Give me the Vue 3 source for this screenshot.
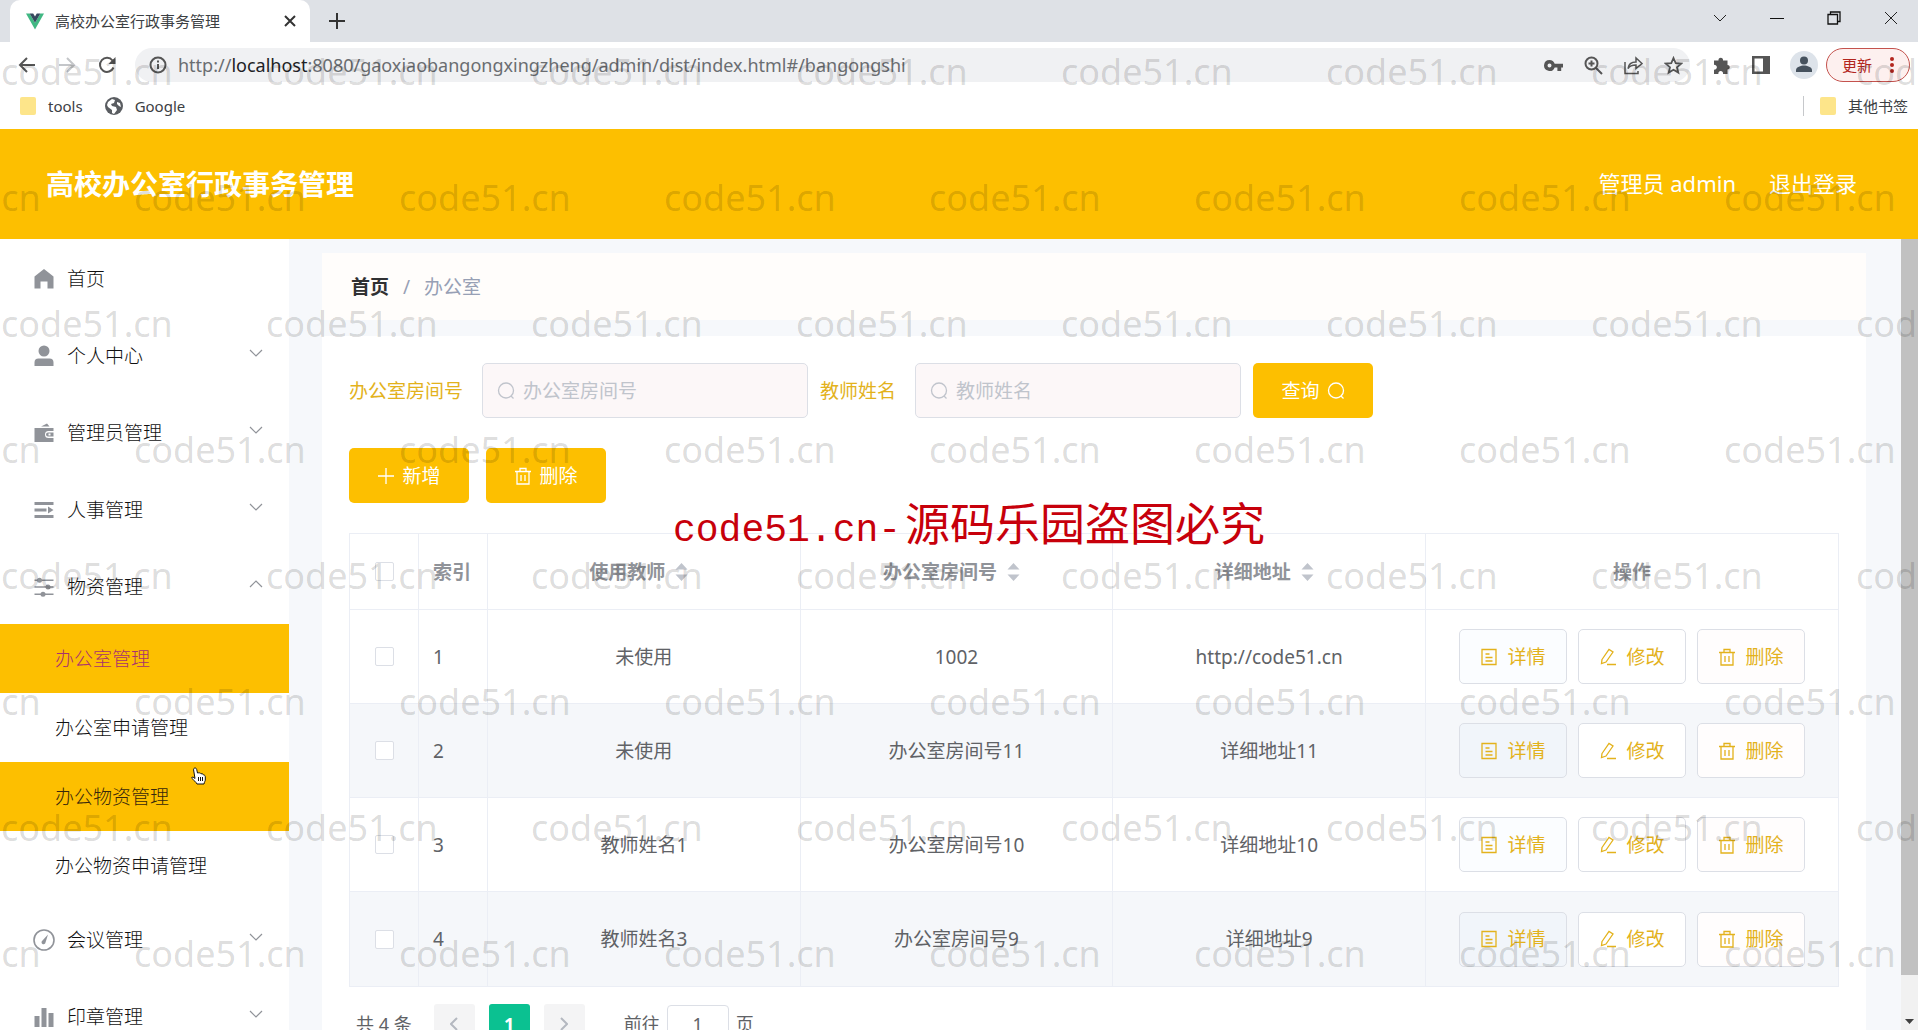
<script setup>
import { ref } from 'vue'

const menu = [
  { label: '首页', icon: 'home' },
  { label: '个人中心', icon: 'user', arrow: 'down' },
  { label: '管理员管理', icon: 'wallet', arrow: 'down' },
  { label: '人事管理', icon: 'list', arrow: 'down' },
  {
    label: '物资管理',
    icon: 'sliders',
    arrow: 'up',
    children: [
      { label: '办公室管理', state: 'active' },
      { label: '办公室申请管理' },
      { label: '办公物资管理', state: 'hover' },
      { label: '办公物资申请管理' }
    ]
  },
  { label: '会议管理', icon: 'gauge', arrow: 'down' },
  { label: '印章管理', icon: 'bars', arrow: 'down' }
]

const columns = ['使用教师', '办公室房间号', '详细地址']

const rows = [
  { id: 1, teacher: '未使用', room: '1002', address: 'http://code51.cn' },
  { id: 2, teacher: '未使用', room: '办公室房间号11', address: '详细地址11' },
  { id: 3, teacher: '教师姓名1', room: '办公室房间号10', address: '详细地址10' },
  { id: 4, teacher: '教师姓名3', room: '办公室房间号9', address: '详细地址9' }
]

const room = ref('')
const teacher = ref('')
const page = ref('1')
</script>

<template>
  <div class="window">
    <div class="tabs">
      <div class="tab">
        <svg class="vue-logo" viewBox="0 0 20 18"><path fill="#41b883" d="M0 0h4l6 10.500L16 0h4L10 18z" /><path fill="#35495e" d="M4 0h4l2 3.500L12 0h4l-6 10.500z" /></svg>
        <span class="tab-title">高校办公室行政事务管理</span>
        <button class="plain" aria-label="关闭标签页">
          <svg width="12" height="12" viewBox="0 0 12 12" fill="none" stroke="#333" stroke-width="2"><path d="M1 1l10 10M11 1L1 11" /></svg>
        </button>
      </div>
      <button class="plain new-tab" aria-label="新标签页">
        <svg width="16" height="16" viewBox="0 0 16 16" fill="none" stroke="#333" stroke-width="2"><path d="M8 0v16M0 8h16" /></svg>
      </button>
      <div class="win-buttons">
        <button class="plain" aria-label="搜索标签页"><svg width="14" height="14" viewBox="0 0 14 14" fill="none" stroke="#222"><path d="M1 4l6 6 6-6" /></svg></button>
        <button class="plain" aria-label="最小化"><svg width="14" height="14" viewBox="0 0 14 14" fill="none" stroke="#111"><path d="M0 7.500h14" /></svg></button>
        <button class="plain" aria-label="还原"><svg width="14" height="14" viewBox="0 0 14 14" fill="none" stroke="#111" stroke-width="1.300"><path d="M1 3.500h9.500V13H1zM3.500 3.500V1H13v9.500h-2.500" /></svg></button>
        <button class="plain" aria-label="关闭"><svg width="14" height="14" viewBox="0 0 14 14" fill="none" stroke="#222"><path d="M1 1l12 12M13 1L1 13" /></svg></button>
      </div>
    </div>

    <div class="toolbar">
      <div class="nav-buttons">
        <button class="plain" aria-label="后退"><svg width="18" height="18" viewBox="0 0 18 18" fill="none" stroke="#555" stroke-width="2"><path d="M17 9H2M9 2L2 9l7 7" /></svg></button>
        <button class="plain" aria-label="前进"><svg width="18" height="18" viewBox="0 0 18 18" fill="none" stroke="#c4c6c9" stroke-width="2"><path d="M1 9h15M9 2l7 7-7 7" /></svg></button>
        <button class="plain" aria-label="刷新"><svg width="18" height="18" viewBox="0 0 18 18" fill="none" stroke="#555" stroke-width="2"><path d="M15.500 11.500A7 7 0 1 1 14.500 4.500" /><path fill="#555" stroke="none" d="M17.500 1v7h-7z" /></svg></button>
      </div>
      <div class="omnibox">
        <svg width="18" height="18" viewBox="0 0 18 18" fill="none" stroke="#555" stroke-width="2"><circle cx="9" cy="9" r="7.500" /><path d="M9 8v5M9 4.500v2" /></svg>
        <span class="url">http://<b>localhost</b>:8080/gaoxiaobangongxingzheng/admin/dist/index.html#/bangongshi</span>
        <div class="omni-icons">
          <svg width="19" height="19" viewBox="0 0 19 19" fill="#555"><path fill-rule="evenodd" d="M5.500 4a5.500 5.500 0 0 1 5.200 3.800H19v3.600h-1.800V15h-3.800v-3.600h-2.700A5.500 5.500 0 1 1 5.500 4zm0 3.600a2 2 0 1 0 0 4 2 2 0 0 0 0-4z" /></svg>
          <svg width="19" height="19" viewBox="0 0 19 19" fill="none" stroke="#555" stroke-width="2"><circle cx="7.500" cy="7.500" r="6" /><path d="M12 12l6 6M7.500 4.500v6M4.500 7.500h6" /></svg>
          <svg width="19" height="19" viewBox="0 0 19 19" fill="none" stroke="#555" stroke-width="1.500"><path d="M1 6v11.500h13V15M4 12.500c.5-4 3-6.500 8-6.500V2l6 5.500-6 5V9c-4 0-6.500 1-8 3.500z" /></svg>
          <svg width="19" height="19" viewBox="0 0 19 19" fill="none" stroke="#555" stroke-width="1.800"><path d="M9.500 2l2.200 5.100 5.500.5-4.200 3.600 1.300 5.400-4.800-2.900-4.800 2.900L6 11.200 1.800 7.600l5.500-.5z" /></svg>
        </div>
      </div>
      <div class="ext-icons">
        <svg width="19" height="19" viewBox="0 0 19 19" fill="#555"><path d="M1 4.500h4.500a2.300 2.300 0 1 1 4.500 0h4.500V9a2.300 2.300 0 1 1 0 4.600V18H10a2.400 2.400 0 1 0-4.600 0H1v-4.400a2.400 2.400 0 1 0 0-4.700z" /></svg>
        <svg width="18" height="18" viewBox="0 0 18 18"><path fill="#555" fill-rule="evenodd" d="M0 0h18v18H0zM2.500 2.500v13h8.500v-13z" /></svg>
        <svg width="28" height="28" viewBox="0 0 28 28"><circle cx="14" cy="14" r="14" fill="#dde3ea" /><g fill="#46525e"><circle cx="14" cy="9.500" r="4" /><path d="M6 21v-2c0-3 5-4.500 8-4.500s8 1.500 8 4.500v2z" /></g></svg>
      </div>
      <button class="update">更新 <svg width="4" height="18" viewBox="0 0 4 18" fill="#b3261e"><circle cx="2" cy="3" r="2" /><circle cx="2" cy="9" r="2" /><circle cx="2" cy="15" r="2" /></svg></button>
    </div>

    <div class="bookmarks">
      <a href="#"><i class="folder"></i>tools</a>
      <a href="#"><svg width="18" height="18" viewBox="0 0 18 18"><circle cx="9" cy="9" r="9" fill="#5a5d61" /><path fill="#fff" d="M3 5l4-3 3 1-1 3-3 1 1 2 4 1 1 3-3 4-2-1 0-3-4-3-1-2zM12 5l3 1 1 4-2-1-2-2z" /></svg>Google</a>
      <a class="other" href="#"><i class="folder"></i>其他书签</a>
    </div>

    <header class="header">
      <h1>高校办公室行政事务管理</h1>
      <div class="account">
        <span>管理员 admin</span>
        <a href="#">退出登录</a>
      </div>
    </header>

    <div class="body">
      <nav class="sidebar">
        <template v-for="item in menu" :key="item.label">
          <a class="menu-item" href="#">
            <svg class="menu-icon" viewBox="0 0 22 22" fill="#909399">
              <path v-if="item.icon === 'home'" d="M11 1l9.500 7.500V20.500h-6V13.500h-7v7h-6V8.500z" />
              <g v-else-if="item.icon === 'user'"><circle cx="11" cy="6" r="5.500" /><path d="M1.500 21v-3.500a4 4 0 0 1 4-4h11a4 4 0 0 1 4 4V21z" /></g>
              <path v-else-if="item.icon === 'wallet'" fill-rule="evenodd" d="M8 4.500L14 1.500l2.500 3zM1.500 6h19v3h-5a3.500 3.500 0 0 0 0 7h5v4h-19zM15 10.500h5.500v4H15a2 2 0 0 1 0-4zm.5 1v2h2v-2z" />
              <path v-else-if="item.icon === 'list'" d="M1.500 3h19v3h-19zM1.500 9.500h12v3h-12zM15 7.500l5.500 3.500-5.500 3.500zM1.500 16h19v3h-19z" />
              <g v-else-if="item.icon === 'sliders'"><path d="M1.500 3.500h19V5h-19zM1.500 10.300h19v1.500h-19zM1.500 17.500h19V19h-19z" /><circle cx="6.500" cy="4.300" r="2.500" /><circle cx="15" cy="11" r="2.500" /><circle cx="10" cy="18.200" r="2.500" /></g>
              <g v-else-if="item.icon === 'gauge'"><circle cx="11" cy="11" r="10" fill="none" stroke="#909399" stroke-width="1.600" /><path d="M15 5.500l-2.500 8a2 2 0 1 1-3-2z" /></g>
              <path v-else d="M1.500 10h5v11h-5zM8.500 2h5v19h-5zM15.500 7h5v14h-5z" />
            </svg>
            <span>{{ item.label }}</span>
            <svg v-if="item.arrow" class="arrow" width="14" height="8" viewBox="0 0 14 8" fill="none" stroke="#909399" stroke-width="1.200"><path :d="item.arrow === 'up' ? 'M1 7l6-6 6 6' : 'M1 1l6 6 6-6'" /></svg>
          </a>
          <div v-if="item.children" class="submenu">
            <a v-for="child in item.children" :key="child.label" class="sub-item" :class="child.state" href="#">
              {{ child.label }}
              <svg v-if="child.state === 'hover'" class="hand" width="16" height="18" viewBox="0 0 16 18" fill="#fff" stroke="#111"><path d="M5 1c1 0 1.500.6 1.700 1.500L7.500 6c2-.5 3 0 3.500.8 1.500-.3 2 .2 2.300 1C15 8 15.300 9 15.300 10v3c0 1-1 2-1.300 4H7c-1-2-3-3.500-5.500-6 .5-1.500 2-1 3.500.5L3.600 3C3.400 1.800 4 1 5 1z" /><path fill="none" d="M8.500 10v4M10.500 10v4M12.500 10v4" /></svg>
            </a>
          </div>
        </template>
      </nav>

      <main class="main">
        <div class="breadcrumb"><strong>首页</strong><span>/</span><span>办公室</span></div>
        <section class="panel">
          <form class="search" @submit.prevent>
            <label for="room">办公室房间号</label>
            <div class="field">
              <svg class="mag" viewBox="0 0 18 18"><circle cx="9" cy="8.500" r="7.500" /><path d="M14 14l2.500 2.500" /></svg>
              <input id="room" v-model="room" type="text" placeholder="办公室房间号" />
            </div>
            <label for="teacher">教师姓名</label>
            <div class="field">
              <svg class="mag" viewBox="0 0 18 18"><circle cx="9" cy="8.500" r="7.500" /><path d="M14 14l2.500 2.500" /></svg>
              <input id="teacher" v-model="teacher" type="text" placeholder="教师姓名" />
            </div>
            <button class="btn primary" type="submit">查询<svg class="mag" viewBox="0 0 18 18"><circle cx="9" cy="8.500" r="7.500" /><path d="M14 14l2.500 2.500" /></svg></button>
          </form>

          <div class="actions">
            <button class="btn primary"><svg viewBox="0 0 18 18"><path d="M9 1v16M1 9h16" /></svg>新增</button>
            <button class="btn primary"><svg viewBox="0 0 18 18"><path d="M1 4.500h16M3 4.500v12.500h12V4.500M6 4V1.500h6V4M7 8v6M11 8v6" /></svg>删除</button>
          </div>

          <table>
            <colgroup><col class="narrow" /><col class="narrow" /><col /><col /><col /><col class="ops-col" /></colgroup>
            <thead>
              <tr>
                <th><input type="checkbox" aria-label="全选" /></th>
                <th class="index">索引</th>
                <th v-for="c in columns" :key="c">
                  <span class="sort">{{ c }}<svg width="33" height="20" viewBox="0 0 33 20" fill="#c0c4cc"><path d="M16.500 1l6 6.500h-12zM16.500 19l6-6.500h-12z" /></svg></span>
                </th>
                <th>操作</th>
              </tr>
            </thead>
            <tbody>
              <tr v-for="row in rows" :key="row.id">
                <td><input type="checkbox" :aria-label="'选择第' + row.id + '行'" /></td>
                <td class="index">{{ row.id }}</td>
                <td>{{ row.teacher }}</td>
                <td>{{ row.room }}</td>
                <td>{{ row.address }}</td>
                <td>
                  <div class="ops">
                    <button class="btn detail"><svg viewBox="0 0 18 18"><path d="M2 1.500h14v15H2zM5.500 6h4M5.500 9.500h7M5.500 13h7" /></svg>详情</button>
                    <button class="btn"><svg viewBox="0 0 18 18"><path d="M3 11.500L10 1.500l4 2.500-7 10-4.500 1.500zM8 16.500h9" /></svg>修改</button>
                    <button class="btn remove"><svg viewBox="0 0 18 18"><path d="M1 4.500h16M3 4.500v12.500h12V4.500M6 4V1.500h6V4M7 8v6M11 8v6" /></svg>删除</button>
                  </div>
                </td>
              </tr>
            </tbody>
          </table>

          <div class="pagination">
            <span>共 4 条</span>
            <div class="pager">
              <button aria-label="上一页"><svg width="8" height="14" viewBox="0 0 8 14"><path d="M7 1L1 7l6 6" /></svg></button>
              <button class="current">1</button>
              <button aria-label="下一页"><svg width="8" height="14" viewBox="0 0 8 14"><path d="M1 1l6 6-6 6" /></svg></button>
            </div>
            <label class="jump">前往<input v-model="page" type="text" />页</label>
          </div>
        </section>
      </main>

      <div class="scrollbar">
        <div class="thumb"></div>
        <svg width="17" height="17" viewBox="0 0 17 17"><path fill="#404040" d="M4 6h9l-4.500 5z" /></svg>
      </div>
    </div>

    <div class="watermarks" aria-hidden="true">
      <div v-for="r in 8" :key="r" class="mark-row"><span v-for="n in 9" :key="n">code51.cn</span></div>
    </div>
    <div class="notice"><span>code51.cn-</span>源码乐园盗图必究</div>
  </div>
</template>

<style>
body {
  margin: 0;
  overflow: hidden;
}
</style>

<style scoped>
.window {
  position: relative;
  display: flex;
  flex-direction: column;
  height: 100vh;
  overflow: hidden;
  background: #fff;
  color: #606266;
  font-family: "Noto Sans", "Noto Sans CJK SC", sans-serif;
  font-size: 19px;
  line-height: 28px;
}
* { box-sizing: border-box; }
a { color: inherit; text-decoration: none; }
button, input { font: inherit; color: inherit; }
svg { flex: none; }
.plain {
  display: flex;
  padding: 0;
  border: 0;
  background: none;
}

.tabs {
  display: flex;
  align-items: center;
  flex: none;
  height: 42px;
  padding-left: 10px;
  background: #dee1e6;
}
.tab {
  display: flex;
  align-items: center;
  width: 300px;
  height: 42px;
  padding: 0 14px 0 16px;
  border-radius: 10px 10px 0 0;
  background: #fff;
  color: #3c4043;
  font-size: 15px;
}
.vue-logo { width: 18px; height: 17px; margin-right: 11px; }
.tab-title { flex: 1; }
.new-tab { margin-left: 19px; }
.win-buttons {
  display: flex;
  gap: 43px;
  margin-left: auto;
  padding: 0 20px 6px 0;
}

.toolbar {
  display: flex;
  align-items: center;
  flex: none;
  height: 46px;
  padding: 0 8px 0 18px;
}
.nav-buttons { display: flex; gap: 22px; width: 117px; }
.omnibox {
  display: flex;
  align-items: center;
  flex: 1;
  height: 34px;
  padding: 0 7px 0 14px;
  border-radius: 17px;
  background: #f0f1f3;
}
.url {
  flex: 1;
  margin-left: 11px;
  color: #6a6d71;
  font-size: 18px;
}
.url b { color: #202124; font-weight: 400; }
.omni-icons { display: flex; gap: 21px; }
.ext-icons { display: flex; align-items: center; gap: 20px; margin: 0 8px 0 23px; }
.update {
  display: flex;
  align-items: center;
  justify-content: space-between;
  width: 84px;
  height: 34px;
  padding: 0 15px;
  border: 1px solid #c4524d;
  border-radius: 17px;
  background: #fdf0ef;
  color: #b3261e;
  font-size: 15px;
}
.bookmarks {
  display: flex;
  align-items: center;
  gap: 22px;
  flex: none;
  height: 41px;
  padding: 0 10px 6px 20px;
  color: #3c4043;
  font-size: 15px;
}
.bookmarks a { display: flex; align-items: center; gap: 12px; }
.folder { width: 16px; height: 18px; border-radius: 2px; background: #fde58a; }
.bookmarks .other {
  margin-left: auto;
  padding-left: 16px;
  border-left: 1px solid #c6c8cb;
  line-height: 20px;
}

.header {
  display: flex;
  align-items: center;
  justify-content: space-between;
  flex: none;
  height: 110px;
  padding: 0 61px 2px 46px;
  background: #fdbf00;
  color: #fff;
  font-size: 22px;
}
h1 { margin: 0; padding-top: 2px; font-size: 28px; line-height: 40px; }
.account { display: flex; gap: 33px; }

.body { display: flex; flex: 1; min-height: 0; }
.sidebar {
  flex: none;
  width: 289px;
  overflow: hidden;
  background: #fff;
  color: #111;
  font-weight: 300;
}
.menu-item {
  display: flex;
  align-items: center;
  height: 77px;
  padding: 2px 26px 0 33px;
}
.menu-icon { width: 22px; height: 22px; margin-right: 12px; }
.arrow { margin: 0 0 6px auto; }
.sub-item {
  position: relative;
  display: flex;
  align-items: center;
  height: 69px;
  padding-left: 55px;
}
.sub-item.active { background: #fdbf00; color: #a8326f; }
.sub-item.hover { background: #fdbf00; color: #38280c; }
.hand { position: absolute; left: 190px; top: 5px; }

.main {
  flex: 1;
  min-width: 0;
  overflow: hidden;
  padding: 14px 35px 0 33px;
  background: #f6f8fb;
}
.breadcrumb {
  display: flex;
  gap: 14px;
  height: 67px;
  padding: 20px 29px;
  background: #fffdfb;
  color: #97a0b5;
}
.breadcrumb strong { color: #303133; }
.panel {
  margin-top: 16px;
  padding: 27px 27px 40px;
  background: #fff;
}
.search { display: flex; align-items: center; color: #e3b21c; }
.search label { margin-right: 19px; }
.field {
  display: flex;
  align-items: center;
  gap: 8px;
  width: 326px;
  height: 55px;
  margin-right: 12px;
  padding: 0 14px;
  border: 1px solid #dcdfe6;
  border-radius: 5px;
  background: #fcf7f8;
}
.field input {
  flex: 1;
  min-width: 0;
  padding: 0;
  border: 0;
  outline: 0;
  background: none;
}
.field input::placeholder { color: #c0c4cc; }
.mag, .btn svg {
  width: 18px;
  height: 18px;
  fill: none;
  stroke: #c0c4cc;
  stroke-width: 1.300;
}
.btn {
  display: flex;
  align-items: center;
  justify-content: center;
  gap: 9px;
  width: 108px;
  height: 55px;
  padding: 0;
  border: 1px solid #dcdfe6;
  border-radius: 5px;
  background: #fff;
  color: #e3b21c;
}
.btn svg { stroke: currentColor; }
.btn.primary {
  gap: 7px;
  width: 120px;
  border: 0;
  background: #fdbf00;
  color: #fff;
}
.detail { background: rgba(64, 128, 255, 0.02); }
.remove { background: #fffdfd; }
.actions { display: flex; gap: 17px; margin: 30px 0; }

table {
  width: 100%;
  table-layout: fixed;
  border-spacing: 0;
  border: 1px solid #ebeef5;
  border-right: 0;
}
.narrow { width: 69px; }
.ops-col { width: 413px; }
th, td {
  height: 94px;
  padding: 0;
  border-right: 1px solid #ebeef5;
  border-bottom: 1px solid #ebeef5;
  text-align: center;
}
th { height: 76px; color: #909399; }
th.index, td.index { padding-left: 14px; text-align: left; }
tbody tr:last-child td { border-bottom: 0; }
tbody tr:nth-child(even) { background: #f5f7fa; }
.sort { display: inline-flex; align-items: center; }
input[type="checkbox"] {
  display: block;
  width: 19px;
  height: 19px;
  margin: 0 auto;
  appearance: none;
  border: 1px solid #dcdfe6;
  border-radius: 2px;
  background: #fff;
}
.ops { display: flex; justify-content: center; gap: 11px; }

.pagination {
  display: flex;
  align-items: center;
  margin-top: 17px;
  padding-left: 7px;
  font-size: 18px;
}
.pager { display: flex; gap: 14px; margin: 0 39px 0 22px; }
.pager button {
  width: 41px;
  height: 39px;
  padding: 0;
  border: 0;
  border-radius: 3px;
  background: #f4f4f5;
}
.pager svg { fill: none; stroke: #b4b8c0; stroke-width: 2; }
.pager .current { background: #0bc191; color: #fff; font-weight: 700; }
.jump { display: flex; align-items: center; gap: 7px; }
.jump input {
  width: 62px;
  height: 38px;
  padding: 0;
  border: 1px solid #dcdfe6;
  border-radius: 4px;
  background: #fff;
  text-align: center;
}

.scrollbar {
  display: flex;
  flex-direction: column;
  justify-content: space-between;
  flex: none;
  width: 17px;
  background: #f1f1f1;
}
.thumb { height: 93%; background: #c1c1c1; }

.watermarks {
  position: absolute;
  inset: 47px 0 0 1px;
  overflow: hidden;
  color: rgba(0, 0, 0, 0.15);
  font-size: 36px;
  line-height: 50px;
  pointer-events: none;
}
.mark-row { display: flex; height: 126px; }
.mark-row:nth-child(even) { margin-left: -132px; }
.mark-row span { flex: none; width: 265px; }
.notice {
  position: absolute;
  left: 673px;
  top: 492px;
  display: flex;
  align-items: baseline;
  gap: 4px;
  color: #c7000b;
  font-family: "Noto Sans CJK SC", sans-serif;
  font-size: 45px;
  line-height: 60px;
  white-space: nowrap;
  pointer-events: none;
}
.notice span { font-family: "Liberation Mono", monospace; font-size: 38px; }
</style>
